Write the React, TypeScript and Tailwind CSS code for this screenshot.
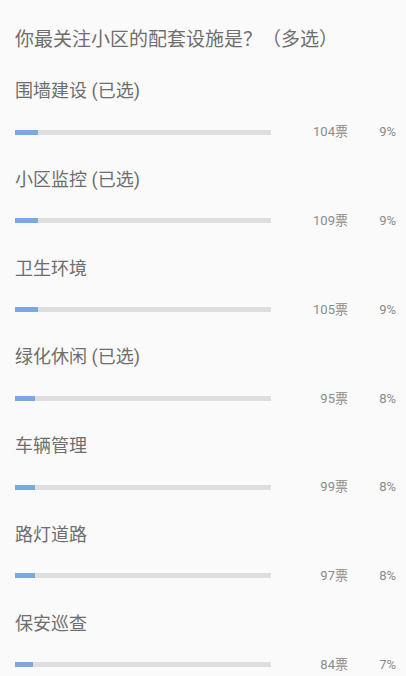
const options = [
  { name: "围墙建设 (已选)", votes: 104, pct: 9 },
  { name: "小区监控 (已选)", votes: 109, pct: 9 },
  { name: "卫生环境", votes: 105, pct: 9 },
  { name: "绿化休闲 (已选)", votes: 95, pct: 8 },
  { name: "车辆管理", votes: 99, pct: 8 },
  { name: "路灯道路", votes: 97, pct: 8 },
  { name: "保安巡查", votes: 84, pct: 7 },
];

export default function App() {
  return (
    <div
      className="h-[676px] w-[406px] overflow-hidden bg-[#fafafa] text-[#6e6e6e]"
      style={{ fontFamily: 'Roboto, "Noto Sans CJK SC", sans-serif' }}
    >
      <div className="pl-[15px] pr-[10px] pt-[28px]">
        <h1 className="text-[19px] font-normal leading-[24px]">
          你最关注小区的配套设施是？（多选）
        </h1>
        <div className="pt-[27px]">
          {options.map((o) => (
            <div key={o.name} className="h-[88.8px]">
              <p className="text-[18px] leading-[24px]">{o.name}</p>
              <div className="mt-[19px] flex h-[20px] items-center">
                <div className="h-[5px] w-[256px] shrink-0 bg-[#dedede]">
                  <div
                    className="h-full bg-[#7ba8de]"
                    style={{ width: `${o.pct}%` }}
                  />
                </div>
                <span className="w-[77px] shrink-0 text-right text-[13px] text-[#8a8a8a]">
                  {o.votes}票
                </span>
                <span className="w-[48px] shrink-0 text-right text-[13px] text-[#8a8a8a]">
                  {o.pct}%
                </span>
              </div>
            </div>
          ))}
        </div>
      </div>
    </div>
  );
}
